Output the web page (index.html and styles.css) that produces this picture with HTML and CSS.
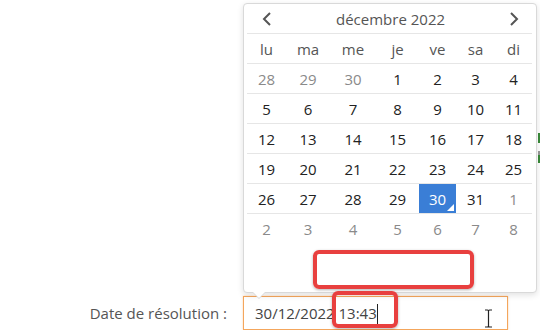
FILE: index.html
```html
<!DOCTYPE html>
<html lang="fr">
<head>
    <meta charset="UTF-8">
    <title>Date de résolution</title>
    <link rel="stylesheet" href="styles.css">
</head>
<body>
    <div class="side-mark"></div>
    <div class="form-row">
        <label class="form-label" for="resolution">Date de résolution :</label>
        <div class="field">
            <div class="picker">
                <table class="cal">
                    <colgroup>
                        <col style="width:39px"><col style="width:44px"><col style="width:46px">
                        <col style="width:43px"><col style="width:37px"><col style="width:39px"><col style="width:37px">
                    </colgroup>
                    <thead>
                        <tr class="cal-head">
                            <th class="nav">
                                <svg width="10" height="14" viewBox="0 0 10 14"><path d="M8 1 L2 7 L8 13" fill="none" stroke="#555" stroke-width="2"/></svg>
                            </th>
                            <th colspan="5" class="month">décembre 2022</th>
                            <th class="nav">
                                <svg width="10" height="14" viewBox="0 0 10 14"><path d="M2 1 L8 7 L2 13" fill="none" stroke="#555" stroke-width="2"/></svg>
                            </th>
                        </tr>
                        <tr class="dow">
                            <th>lu</th><th>ma</th><th>me</th><th>je</th><th>ve</th><th>sa</th><th>di</th>
                        </tr>
                    </thead>
                    <tbody>
                        <tr><td class="old">28</td><td class="old">29</td><td class="old">30</td><td>1</td><td>2</td><td>3</td><td>4</td></tr>
                        <tr><td>5</td><td>6</td><td>7</td><td>8</td><td>9</td><td>10</td><td>11</td></tr>
                        <tr><td>12</td><td>13</td><td>14</td><td>15</td><td>16</td><td>17</td><td>18</td></tr>
                        <tr><td>19</td><td>20</td><td>21</td><td>22</td><td>23</td><td>24</td><td>25</td></tr>
                        <tr><td>26</td><td>27</td><td>28</td><td>29</td><td class="active">30</td><td>31</td><td class="new">1</td></tr>
                        <tr class="last"><td class="new">2</td><td class="new">3</td><td class="new">4</td><td class="new">5</td><td class="new">6</td><td class="new">7</td><td class="new">8</td></tr>
                    </tbody>
                </table>
                <div class="mark mark-time"></div>
            </div>
            <div class="input" id="resolution">30/12/2022 13:43<span class="caret"></span></div>
            <div class="mark mark-input"></div>
            <svg class="ibeam" width="9" height="19" viewBox="0 0 9 19">
                <path d="M1 1 H3.5 Q4.5 1 4.5 2 V17 Q4.5 18 3.5 18 H1 M8 1 H5.5 Q4.5 1 4.5 2 M8 18 H5.5 Q4.5 18 4.5 17" fill="none" stroke="#222" stroke-width="1.2"/>
            </svg>
        </div>
    </div>
</body>
</html>
```

FILE: styles.css
```css
body {
    margin: 0;
    font-family: "Open Sans", "Noto Sans", sans-serif;
    background: #fff;
    color: #333;
}
.side-mark {
    position: absolute;
    right: 0;
    top: 133px;
    width: 2px;
    height: 30px;
    background: linear-gradient(#3a8a3a 0 10px, #fff 10px 18px, #999 18px 22px, #3a8a3a 22px 30px);
}
.form-row {
    display: grid;
    grid-template-columns: 227px 265px;
    column-gap: 16px;
    align-items: center;
    padding-top: 296px;
}
.form-label {
    text-align: right;
    font-size: 15px;
    color: #555;
}
.field {
    position: relative;
}
.input {
    box-sizing: border-box;
    height: 34px;
    border: 1px solid #f4a65c;
    box-shadow: 0 0 2px rgba(244, 166, 92, 0.5);
    padding: 0 11px;
    font-size: 15px;
    line-height: 32px;
    color: #444;
}
.caret {
    display: inline-block;
    width: 1px;
    height: 20px;
    background: #222;
    vertical-align: -5px;
}
.picker {
    position: absolute;
    left: 0;
    bottom: 37px;
    width: 294px;
    height: 290px;
    box-sizing: border-box;
    padding: 0 3px;
    background: #fff;
    border: 1px solid #d9d9d9;
    border-radius: 4px;
    box-shadow: 0 2px 6px rgba(0, 0, 0, 0.12);
}
.picker::before,
.picker::after {
    content: "";
    position: absolute;
    left: 8px;
    border-left: 7px solid transparent;
    border-right: 7px solid transparent;
}
.picker::before {
    bottom: -7px;
    border-top: 7px solid #d9d9d9;
}
.picker::after {
    bottom: -6px;
    border-top: 7px solid #fff;
}
.cal {
    border-collapse: collapse;
    table-layout: fixed;
    width: 285px;
    font-size: 15px;
}
.cal th,
.cal td {
    height: 29px;
    padding: 0;
    text-align: center;
    border-bottom: 1px solid #e6e6e6;
}
.cal .last td {
    border-bottom: none;
}
.cal th {
    font-weight: normal;
    color: #555;
}
.cal .month {
    font-size: 15px;
    color: #555;
}
.cal .nav svg {
    display: block;
    margin: 0 auto;
}
.cal td {
    color: #222;
}
.cal td.old,
.cal td.new {
    color: #8a8a8a;
}
.cal td.active {
    position: relative;
    background: #3a7ed6;
    color: #fff;
}
.cal td.active::after {
    content: "";
    position: absolute;
    right: 2px;
    bottom: 2px;
    border-left: 7px solid transparent;
    border-bottom: 7px solid #fff;
}
.mark {
    position: absolute;
    border: 4px solid #e8403f;
    border-radius: 6px;
    box-shadow: 0 1px 3px rgba(0, 0, 0, 0.3);
}
.mark-time {
    left: 69px;
    top: 246px;
    width: 153px;
    height: 31px;
}
.mark-input {
    left: 89px;
    top: -5px;
    width: 58px;
    height: 29px;
}
.ibeam {
    position: absolute;
    left: 241px;
    top: 13px;
}
```
